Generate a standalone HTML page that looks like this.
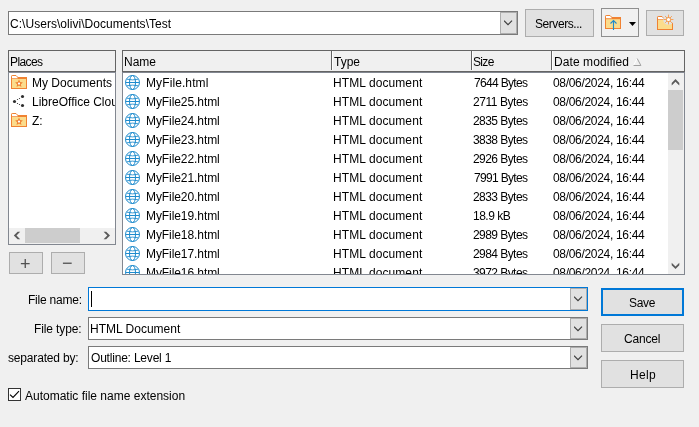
<!DOCTYPE html>
<html><head><meta charset="utf-8"><title>Save</title>
<style>
html,body{margin:0;padding:0}
body{width:699px;height:427px;background:#f0f0f0;position:relative;overflow:hidden;font-family:"Liberation Sans",sans-serif;font-size:12px;color:#000}
.a{position:absolute;box-sizing:border-box}
.t{position:absolute;white-space:nowrap;line-height:16px;height:16px;filter:grayscale(1)}
.ic{position:absolute}
.btn{position:absolute;box-sizing:border-box;background:#e1e1e1;border:1px solid #adadad}
.combo{position:absolute;box-sizing:border-box;background:#fff;border:1px solid #7a7a7a}
.dd{position:absolute;box-sizing:border-box;background:#e1e1e1;border:1px solid #adadad}
</style></head><body>

<div class="combo" style="left:8px;top:11px;width:510px;height:24px"></div>
<div class="dd" style="left:500px;top:12px;width:17px;height:22px"></div>
<svg class="ic" style="left:504px;top:20px" width="9" height="6" viewBox="0 0 9 6"><path d="M0 .7L4 4.700L8 .7" fill="none" stroke="#3c3c3c" stroke-width="1.150"/></svg>
<div class="t" style="left:10px;top:16px;letter-spacing:0.04px;">C:\Users\olivi\Documents\Test</div>
<div class="btn" style="left:525px;top:9px;width:69px;height:28px"></div>
<div class="t" style="left:535px;top:16px;letter-spacing:-0.44px;">Servers...</div>
<div class="a" style="left:601px;top:8px;width:38px;height:29px;border:1px solid #8e8e8e;background:#f0f0f0"></div>
<svg class="ic" style="left:605px;top:15px" width="16" height="16" viewBox="0 0 16 16"><rect x=".5" y="2.500" width="15" height="11" fill="#fbdc8c" stroke="#f08232"/><rect x="1" y="2.500" width="14" height="1.700" fill="#f08232"/><path d="M1 1H5L6.800 2.800V3.300H1Z" fill="#fff"/><path d="M.5 3V1.200Q.5 .5 1.200 .5H5L7 2.500" fill="none" stroke="#f08232"/><path d="M8.500 15V5.6M5.5 8.5L8.5 5.5L11.5 8.5" fill="none" stroke="#1e8bcd" stroke-width="1.1"/></svg>
<svg class="ic" style="left:629px;top:22px" width="7" height="4" viewBox="0 0 7 4"><path d="M0 0H7L3.5 4Z" fill="#000"/></svg>
<div class="btn" style="left:646px;top:10px;width:38px;height:26px"></div>
<svg class="ic" style="left:657px;top:14px" width="18" height="17" viewBox="0 0 18 17"><rect x=".5" y="4.500" width="15" height="11" fill="#fbdc8c" stroke="#f08232"/><rect x="1" y="4.500" width="14" height="1.500" fill="#f08232"/><path d="M1 3H5L6.800 4.800V5.300H1Z" fill="#fff"/><path d="M.5 5V3.200Q.5 2.500 1.200 2.500H5L7 4.500" fill="none" stroke="#f08232"/><circle cx="11.500" cy="5.500" r="5.300" fill="#e1e1e1"/><g stroke="#f5a35c" stroke-width="1"><path d="M11.500 .6V10.400M6.600 5.500H16.400M8.100 2.100L14.900 8.900M14.900 2.100L8.100 8.900"/></g><circle cx="11.500" cy="5.500" r="2.500" fill="#f39a4c"/><circle cx="11.500" cy="5.500" r="1.600" fill="#fff"/></svg>
<div class="a" style="left:8px;top:50px;width:108px;height:22px;border:1px solid #646464;background:#f0f0f0"></div>
<div class="t" style="left:10px;top:54px;letter-spacing:-0.6px;">Places</div>
<div class="a" style="left:8px;top:72px;width:108px;height:173px;border:1px solid #828790;border-top-color:#8a8f99;background:#fff"></div>
<svg class="ic" style="left:11px;top:75px" width="16" height="14" viewBox="0 0 16 14"><rect x=".5" y="2.500" width="15" height="11" fill="#fbdc8c" stroke="#f08232"/><rect x="1" y="2.500" width="14" height="1.500" fill="#f08232"/><path d="M1 1H5L6.800 2.800V3.200H1Z" fill="#fff"/><path d="M.5 3V1.200Q.5 .5 1.200 .5H5L7 2.500" fill="none" stroke="#f08232"/><path d="M8 4.600l1.150 2.500 2.750.300-2.050 1.850.600 2.700L8 10.600 5.550 11.950l.600-2.700L4.100 7.400l2.750-.300Z" fill="#f08232"/><circle cx="8" cy="8.600" r="1.150" fill="#fff"/></svg>
<div class="t" style="left:32px;top:75px;">My Documents</div>
<svg class="ic" style="left:8px;top:91px" width="20" height="20" viewBox="0 0 20 20"><g fill="#2e2e2e"><circle cx="6.500" cy="10.500" r="1.550"/><circle cx="14.500" cy="5.500" r="1.550"/><circle cx="14.500" cy="14.500" r="1.550"/><circle cx="9.500" cy="8.500" r=".62"/><circle cx="11.500" cy="7.500" r=".62"/><circle cx="9.500" cy="12.500" r=".62"/><circle cx="11.500" cy="13.500" r=".62"/></g></svg>
<div class="a" style="left:30px;top:94px;width:85px;height:16px;overflow:hidden"><div class="t" style="left:2px;top:0;letter-spacing:0.0px">LibreOffice Cloud</div></div>
<svg class="ic" style="left:11px;top:113px" width="16" height="14" viewBox="0 0 16 14"><rect x=".5" y="2.500" width="15" height="11" fill="#fbdc8c" stroke="#f08232"/><rect x="1" y="2.500" width="14" height="1.500" fill="#f08232"/><path d="M1 1H5L6.800 2.800V3.200H1Z" fill="#fff"/><path d="M.5 3V1.200Q.5 .5 1.200 .5H5L7 2.500" fill="none" stroke="#f08232"/><path d="M8 4.600l1.150 2.500 2.750.300-2.050 1.850.600 2.700L8 10.600 5.550 11.950l.600-2.700L4.100 7.400l2.750-.300Z" fill="#f08232"/><circle cx="8" cy="8.600" r="1.150" fill="#fff"/></svg>
<div class="t" style="left:32px;top:113px;">Z:</div>
<div class="a" style="left:9px;top:228px;width:106px;height:16px;background:#f0f0f0"></div>
<div class="a" style="left:25px;top:228px;width:55px;height:15px;background:#cdcdcd"></div>
<svg class="ic" style="left:9px;top:228px" width="106" height="16" viewBox="9 228 106 16"><g fill="#5a5a5a"><path d="M13.800 235.500L17.600 231.700H20.200L16.500 235.500L20.200 239.300H17.600Z"/><path d="M110 235.500L106.200 231.700H103.600L107.300 235.500L103.600 239.300H106.200Z"/></g></svg>
<div class="btn" style="left:9px;top:252px;width:34px;height:22px"></div>
<div class="btn" style="left:51px;top:252px;width:34px;height:22px"></div>
<div class="t" style="left:20px;top:253px;font-size:18px;line-height:22px;height:22px;color:#505050">+</div>
<div class="t" style="left:62px;top:252px;font-size:18px;line-height:22px;height:22px;color:#505050">−</div>
<div class="a" style="left:122px;top:50px;width:563px;height:22px;border:1px solid #646464;background:#f0f0f0"></div>
<div class="a" style="left:331px;top:51px;width:1px;height:19px;background:#646464"></div><div class="a" style="left:332px;top:51px;width:1px;height:19px;background:#fff"></div>
<div class="a" style="left:471px;top:51px;width:1px;height:19px;background:#646464"></div><div class="a" style="left:472px;top:51px;width:1px;height:19px;background:#fff"></div>
<div class="a" style="left:551px;top:51px;width:1px;height:19px;background:#646464"></div><div class="a" style="left:552px;top:51px;width:1px;height:19px;background:#fff"></div>
<div class="t" style="left:124px;top:54px;">Name</div>
<div class="t" style="left:334px;top:54px;">Type</div>
<div class="t" style="left:473px;top:54px;letter-spacing:-0.67px;">Size</div>
<div class="t" style="left:554px;top:54px;letter-spacing:0.08px;">Date modified</div>
<svg class="ic" style="left:633px;top:58px" width="9" height="8" viewBox="0 0 9 8"><path d="M4.200 .5L.5 7.500" stroke="#fff" fill="none"/><path d="M4.200 .5L7.900 7.500H.5" stroke="#a0a0a0" fill="none"/></svg>
<div class="a" style="left:122px;top:72px;width:563px;height:203px;border:1px solid #828790;background:#fff;overflow:hidden">
<svg class="ic" style="left:2px;top:2px" width="15" height="15" viewBox="0 0 15 15"><g fill="none" stroke="#1e8bcd" stroke-width="1"><circle cx="7.5" cy="7.5" r="7"/><ellipse cx="7.5" cy="7.5" rx="3" ry="7"/><path d="M.5 7.5H14.5"/><path d="M1.800 4.200Q7.500 5.600 13.200 4.200M1.800 10.800Q7.500 9.400 13.200 10.800" stroke-width=".9"/></g></svg>
<div class="t" style="left:23px;top:2px;letter-spacing:0.1px;">MyFile.html</div>
<div class="t" style="left:210px;top:2px;letter-spacing:0.08px;">HTML document</div>
<div class="t" style="left:351px;top:2px;letter-spacing:-0.67px;">7644 Bytes</div>
<div class="t" style="left:430px;top:2px;letter-spacing:-0.31px;">08/06/2024, 16:44</div>
<svg class="ic" style="left:2px;top:21px" width="15" height="15" viewBox="0 0 15 15"><g fill="none" stroke="#1e8bcd" stroke-width="1"><circle cx="7.5" cy="7.5" r="7"/><ellipse cx="7.5" cy="7.5" rx="3" ry="7"/><path d="M.5 7.5H14.5"/><path d="M1.800 4.200Q7.500 5.600 13.200 4.200M1.800 10.800Q7.500 9.400 13.200 10.800" stroke-width=".9"/></g></svg>
<div class="t" style="left:23px;top:21px;letter-spacing:-0.08px;">MyFile25.html</div>
<div class="t" style="left:210px;top:21px;letter-spacing:0.08px;">HTML document</div>
<div class="t" style="left:350px;top:21px;letter-spacing:-0.44px;">2711 Bytes</div>
<div class="t" style="left:430px;top:21px;letter-spacing:-0.31px;">08/06/2024, 16:44</div>
<svg class="ic" style="left:2px;top:40px" width="15" height="15" viewBox="0 0 15 15"><g fill="none" stroke="#1e8bcd" stroke-width="1"><circle cx="7.5" cy="7.5" r="7"/><ellipse cx="7.5" cy="7.5" rx="3" ry="7"/><path d="M.5 7.5H14.5"/><path d="M1.800 4.200Q7.500 5.600 13.200 4.200M1.800 10.800Q7.500 9.400 13.200 10.800" stroke-width=".9"/></g></svg>
<div class="t" style="left:23px;top:40px;letter-spacing:-0.08px;">MyFile24.html</div>
<div class="t" style="left:210px;top:40px;letter-spacing:0.08px;">HTML document</div>
<div class="t" style="left:350px;top:40px;letter-spacing:-0.56px;">2835 Bytes</div>
<div class="t" style="left:430px;top:40px;letter-spacing:-0.31px;">08/06/2024, 16:44</div>
<svg class="ic" style="left:2px;top:59px" width="15" height="15" viewBox="0 0 15 15"><g fill="none" stroke="#1e8bcd" stroke-width="1"><circle cx="7.5" cy="7.5" r="7"/><ellipse cx="7.5" cy="7.5" rx="3" ry="7"/><path d="M.5 7.5H14.5"/><path d="M1.800 4.200Q7.500 5.600 13.200 4.200M1.800 10.800Q7.500 9.400 13.200 10.800" stroke-width=".9"/></g></svg>
<div class="t" style="left:23px;top:59px;letter-spacing:-0.08px;">MyFile23.html</div>
<div class="t" style="left:210px;top:59px;letter-spacing:0.08px;">HTML document</div>
<div class="t" style="left:350px;top:59px;letter-spacing:-0.56px;">3838 Bytes</div>
<div class="t" style="left:430px;top:59px;letter-spacing:-0.31px;">08/06/2024, 16:44</div>
<svg class="ic" style="left:2px;top:78px" width="15" height="15" viewBox="0 0 15 15"><g fill="none" stroke="#1e8bcd" stroke-width="1"><circle cx="7.5" cy="7.5" r="7"/><ellipse cx="7.5" cy="7.5" rx="3" ry="7"/><path d="M.5 7.5H14.5"/><path d="M1.800 4.200Q7.500 5.600 13.200 4.200M1.800 10.800Q7.500 9.400 13.200 10.800" stroke-width=".9"/></g></svg>
<div class="t" style="left:23px;top:78px;letter-spacing:-0.08px;">MyFile22.html</div>
<div class="t" style="left:210px;top:78px;letter-spacing:0.08px;">HTML document</div>
<div class="t" style="left:350px;top:78px;letter-spacing:-0.56px;">2926 Bytes</div>
<div class="t" style="left:430px;top:78px;letter-spacing:-0.31px;">08/06/2024, 16:44</div>
<svg class="ic" style="left:2px;top:97px" width="15" height="15" viewBox="0 0 15 15"><g fill="none" stroke="#1e8bcd" stroke-width="1"><circle cx="7.5" cy="7.5" r="7"/><ellipse cx="7.5" cy="7.5" rx="3" ry="7"/><path d="M.5 7.5H14.5"/><path d="M1.800 4.200Q7.500 5.600 13.200 4.200M1.800 10.800Q7.500 9.400 13.200 10.800" stroke-width=".9"/></g></svg>
<div class="t" style="left:23px;top:97px;letter-spacing:-0.08px;">MyFile21.html</div>
<div class="t" style="left:210px;top:97px;letter-spacing:0.08px;">HTML document</div>
<div class="t" style="left:351px;top:97px;letter-spacing:-0.67px;">7991 Bytes</div>
<div class="t" style="left:430px;top:97px;letter-spacing:-0.31px;">08/06/2024, 16:44</div>
<svg class="ic" style="left:2px;top:116px" width="15" height="15" viewBox="0 0 15 15"><g fill="none" stroke="#1e8bcd" stroke-width="1"><circle cx="7.5" cy="7.5" r="7"/><ellipse cx="7.5" cy="7.5" rx="3" ry="7"/><path d="M.5 7.5H14.5"/><path d="M1.800 4.200Q7.500 5.600 13.200 4.200M1.800 10.800Q7.500 9.400 13.200 10.800" stroke-width=".9"/></g></svg>
<div class="t" style="left:23px;top:116px;letter-spacing:-0.08px;">MyFile20.html</div>
<div class="t" style="left:210px;top:116px;letter-spacing:0.08px;">HTML document</div>
<div class="t" style="left:350px;top:116px;letter-spacing:-0.56px;">2833 Bytes</div>
<div class="t" style="left:430px;top:116px;letter-spacing:-0.31px;">08/06/2024, 16:44</div>
<svg class="ic" style="left:2px;top:135px" width="15" height="15" viewBox="0 0 15 15"><g fill="none" stroke="#1e8bcd" stroke-width="1"><circle cx="7.5" cy="7.5" r="7"/><ellipse cx="7.5" cy="7.5" rx="3" ry="7"/><path d="M.5 7.5H14.5"/><path d="M1.800 4.200Q7.500 5.600 13.200 4.200M1.800 10.800Q7.500 9.400 13.200 10.800" stroke-width=".9"/></g></svg>
<div class="t" style="left:23px;top:135px;letter-spacing:-0.08px;">MyFile19.html</div>
<div class="t" style="left:210px;top:135px;letter-spacing:0.08px;">HTML document</div>
<div class="t" style="left:350px;top:135px;letter-spacing:-0.5px;">18.9 kB</div>
<div class="t" style="left:430px;top:135px;letter-spacing:-0.31px;">08/06/2024, 16:44</div>
<svg class="ic" style="left:2px;top:154px" width="15" height="15" viewBox="0 0 15 15"><g fill="none" stroke="#1e8bcd" stroke-width="1"><circle cx="7.5" cy="7.5" r="7"/><ellipse cx="7.5" cy="7.5" rx="3" ry="7"/><path d="M.5 7.5H14.5"/><path d="M1.800 4.200Q7.500 5.600 13.200 4.200M1.800 10.800Q7.500 9.400 13.200 10.800" stroke-width=".9"/></g></svg>
<div class="t" style="left:23px;top:154px;letter-spacing:-0.08px;">MyFile18.html</div>
<div class="t" style="left:210px;top:154px;letter-spacing:0.08px;">HTML document</div>
<div class="t" style="left:350px;top:154px;letter-spacing:-0.56px;">2989 Bytes</div>
<div class="t" style="left:430px;top:154px;letter-spacing:-0.31px;">08/06/2024, 16:44</div>
<svg class="ic" style="left:2px;top:173px" width="15" height="15" viewBox="0 0 15 15"><g fill="none" stroke="#1e8bcd" stroke-width="1"><circle cx="7.5" cy="7.5" r="7"/><ellipse cx="7.5" cy="7.5" rx="3" ry="7"/><path d="M.5 7.5H14.5"/><path d="M1.800 4.200Q7.500 5.600 13.200 4.200M1.800 10.800Q7.500 9.400 13.200 10.800" stroke-width=".9"/></g></svg>
<div class="t" style="left:23px;top:173px;letter-spacing:-0.08px;">MyFile17.html</div>
<div class="t" style="left:210px;top:173px;letter-spacing:0.08px;">HTML document</div>
<div class="t" style="left:350px;top:173px;letter-spacing:-0.56px;">2984 Bytes</div>
<div class="t" style="left:430px;top:173px;letter-spacing:-0.31px;">08/06/2024, 16:44</div>
<svg class="ic" style="left:2px;top:192px" width="15" height="15" viewBox="0 0 15 15"><g fill="none" stroke="#1e8bcd" stroke-width="1"><circle cx="7.5" cy="7.5" r="7"/><ellipse cx="7.5" cy="7.5" rx="3" ry="7"/><path d="M.5 7.5H14.5"/><path d="M1.800 4.200Q7.500 5.600 13.200 4.200M1.800 10.800Q7.500 9.400 13.200 10.800" stroke-width=".9"/></g></svg>
<div class="t" style="left:23px;top:192px;letter-spacing:-0.08px;">MyFile16.html</div>
<div class="t" style="left:210px;top:192px;letter-spacing:0.08px;">HTML document</div>
<div class="t" style="left:350px;top:192px;letter-spacing:-0.56px;">3972 Bytes</div>
<div class="t" style="left:430px;top:192px;letter-spacing:-0.31px;">08/06/2024, 16:44</div>
<div class="a" style="left:545px;top:0;width:17px;height:201px;background:#f0f0f0"></div>
<div class="a" style="left:545px;top:17px;width:15px;height:60px;background:#cdcdcd"></div>
<svg class="ic" style="left:545px;top:0" width="16" height="201" viewBox="668 73 16 201"><g fill="#5a5a5a"><path d="M675.500 79.100L679.300 82.900V85.400L675.500 81.700L671.700 85.400V82.900Z"/><path d="M675.500 269.100L679.300 265.300V262.800L675.500 266.500L671.700 262.800V265.300Z"/></g></svg>
</div>
<div class="t" style="left:28px;top:292px;letter-spacing:-0.22px;">File name:</div>
<div class="t" style="left:34px;top:321px;letter-spacing:-0.11px;">File type:</div>
<div class="t" style="left:8px;top:350px;letter-spacing:-0.17px;">separated by:</div>
<div class="combo" style="left:88px;top:287px;width:500px;height:24px;border-color:#0078d7"></div>
<div class="dd" style="left:570px;top:288px;width:17px;height:22px"></div>
<svg class="ic" style="left:574px;top:296px" width="9" height="6" viewBox="0 0 9 6"><path d="M0 .7L4 4.700L8 .7" fill="none" stroke="#3c3c3c" stroke-width="1.150"/></svg>
<div class="a" style="left:91px;top:291px;width:1px;height:16px;background:#000"></div>
<div class="combo" style="left:88px;top:317px;width:500px;height:23px"></div>
<div class="dd" style="left:570px;top:318px;width:17px;height:21px"></div>
<svg class="ic" style="left:574px;top:326px" width="9" height="6" viewBox="0 0 9 6"><path d="M0 .7L4 4.700L8 .7" fill="none" stroke="#3c3c3c" stroke-width="1.150"/></svg>
<div class="t" style="left:90px;top:321px;">HTML Document</div>
<div class="combo" style="left:88px;top:346px;width:500px;height:23px"></div>
<div class="dd" style="left:570px;top:347px;width:17px;height:21px"></div>
<svg class="ic" style="left:574px;top:355px" width="9" height="6" viewBox="0 0 9 6"><path d="M0 .7L4 4.700L8 .7" fill="none" stroke="#3c3c3c" stroke-width="1.150"/></svg>
<div class="t" style="left:91px;top:350px;letter-spacing:-0.2px;">Outline: Level 1</div>
<div class="btn" style="left:601px;top:288px;width:83px;height:28px;border:2px solid #0078d7"></div>
<div class="t" style="left:629px;top:295px;letter-spacing:-0.33px;">Save</div>
<div class="btn" style="left:601px;top:324px;width:83px;height:28px"></div>
<div class="t" style="left:624px;top:331px;letter-spacing:-0.2px;">Cancel</div>
<div class="btn" style="left:601px;top:360px;width:83px;height:28px"></div>
<div class="t" style="left:630px;top:367px;letter-spacing:0.33px;">Help</div>
<div class="a" style="left:8px;top:388px;width:13px;height:13px;border:1px solid #333;background:#fff"></div>
<svg class="ic" style="left:8px;top:388px" width="13" height="13" viewBox="0 0 13 13"><path d="M2 6.600L5 9.500L11 3.200" fill="none" stroke="#000" stroke-width="1.100"/></svg>
<div class="t" style="left:25px;top:388px;">Automatic file name extension</div>
</body></html>
